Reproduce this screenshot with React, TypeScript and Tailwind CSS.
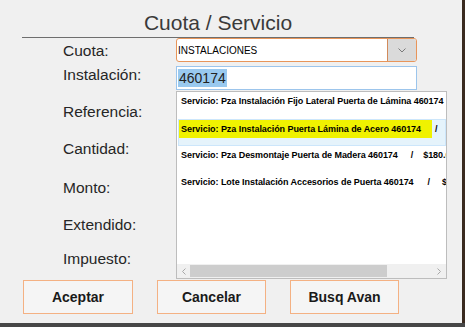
export default function App() {
  const labels: { t: string; mt: string }[] = [
    { t: "Cuota:", mt: "mt-[3px]" },
    { t: "Instalación:", mt: "mt-[4px]" },
    { t: "Referencia:", mt: "mt-[17px]" },
    { t: "Cantidad:", mt: "mt-[17px]" },
    { t: "Monto:", mt: "mt-[19px]" },
    { t: "Extendido:", mt: "mt-[17px]" },
    { t: "Impuesto:", mt: "mt-[14px]" },
  ];
  return (
    <div className="w-[465px] h-[327px] flex flex-col bg-[#f0f0f0] overflow-hidden font-['Liberation_Sans',Arial,sans-serif]">
      <div className="flex h-[323px]">
        <div className="w-[462px] flex flex-col">
          <div className="mt-[10px] ml-[22px] w-[392px] h-[26px] text-center text-[21px] leading-[26px] text-[#3a3a3a]">
            Cuota / Servicio
          </div>
          <div className="mt-[1px] ml-[22px] w-[392px] h-px bg-[#6e6e6e]" />
          <div className="flex h-[241px]">
            <div className="ml-[63px] w-[113px] flex flex-col">
              {labels.map((l) => (
                <div key={l.t} className={`${l.mt} h-[20px] text-[15.5px] leading-[20px] text-[#262626] whitespace-nowrap`}>
                  {l.t}
                </div>
              ))}
            </div>
            <div className="w-[271px] flex flex-col">
              <div className="h-[24px] w-[241px] border border-[#e8955a] rounded-[3px] flex bg-white overflow-hidden">
                <div className="flex-1 flex items-center pl-[1px] text-[10px] text-black">INSTALACIONES</div>
                <div className="w-[29px] bg-[#dadada] border-l border-[#d28a5a] flex items-center justify-center">
                  <svg width="8" height="5" viewBox="0 0 8 5">
                    <path d="M0.5 0.5 L4 4 L7.5 0.5" fill="none" stroke="#7a7a7a" strokeWidth="1" />
                  </svg>
                </div>
              </div>
              <div className="mt-[4px] h-[24px] w-[241px] border border-[#9cc5ec] bg-white flex items-center">
                <span className="ml-[1px] px-[1px] bg-[#99c9ef] text-[14px] leading-[18px] text-[#222]">460174</span>
              </div>
              <div className="mt-[1px] h-[188px] w-[271px] border border-[#bdbdbd] bg-white flex flex-col overflow-hidden">
                <div className="flex-1 flex flex-col text-[9px] tracking-[-0.06px] font-bold text-black whitespace-nowrap overflow-hidden">
                  <div className="h-[27px] pl-[4px] pt-[2px] leading-[14px]">
                    Servicio: Pza Instalación Fijo Lateral Puerta de Lámina 460174
                  </div>
                  <div className="h-[27px] ml-[1px] border border-[#cce6fb] bg-[#e5f3fb] flex items-start">
                    <span className="inline-block h-[18px] leading-[18px] pl-[2px] pr-[11px] bg-[#f0f200]">
                      Servicio: Pza Instalación Puerta Lámina de Acero 460174
                    </span>
                    <span className="ml-[3px] leading-[18px]">/</span>
                  </div>
                  <div className="h-[27px] pl-[4px] pt-[2px] leading-[14px]">
                    Servicio: Pza Desmontaje Puerta de Madera 460174
                    <span className="ml-[13px]">/</span>
                    <span className="ml-[10px]">$180.00</span>
                  </div>
                  <div className="h-[27px] pl-[4px] pt-[2px] leading-[14px]">
                    Servicio: Lote Instalación Accesorios de Puerta 460174
                    <span className="ml-[14px]">/</span>
                    <span className="ml-[12px]">$250.00</span>
                  </div>
                </div>
                <div className="h-[14px] bg-[#f0f0f0] flex items-center shrink-0">
                  <div className="w-[13px] flex items-center justify-center">
                    <svg width="4" height="7" viewBox="0 0 4 7">
                      <path d="M3.5 0.5 L0.5 3.5 L3.5 6.5" fill="none" stroke="#a8a8a8" strokeWidth="1" />
                    </svg>
                  </div>
                  <div className="w-[197px] h-[12px] bg-[#cdcdcd]" />
                  <div className="flex-1" />
                  <div className="w-[14px] flex items-center justify-center">
                    <svg width="4" height="7" viewBox="0 0 4 7">
                      <path d="M0.5 0.5 L3.5 3.5 L0.5 6.5" fill="none" stroke="#a8a8a8" strokeWidth="1" />
                    </svg>
                  </div>
                </div>
              </div>
            </div>
          </div>
          <div className="flex ml-[23px] gap-[24px] mt-[1px]">
            {[
              { t: "Aceptar", w: "w-[110px]" },
              { t: "Cancelar", w: "w-[109px]" },
              { t: "Busq Avan", w: "w-[109px]" },
            ].map((b) => (
              <div
                key={b.t}
                className={`${b.w} h-[34px] border border-[#f4b183] bg-[#f5f5f5] flex items-center justify-center text-[14px] font-bold text-[#1a1a1a]`}
              >
                {b.t}
              </div>
            ))}
          </div>
        </div>
        <div className="w-[3px] bg-[#3a2a1f]" />
      </div>
      <div className="h-[4px] bg-[#474747]" />
    </div>
  );
}
